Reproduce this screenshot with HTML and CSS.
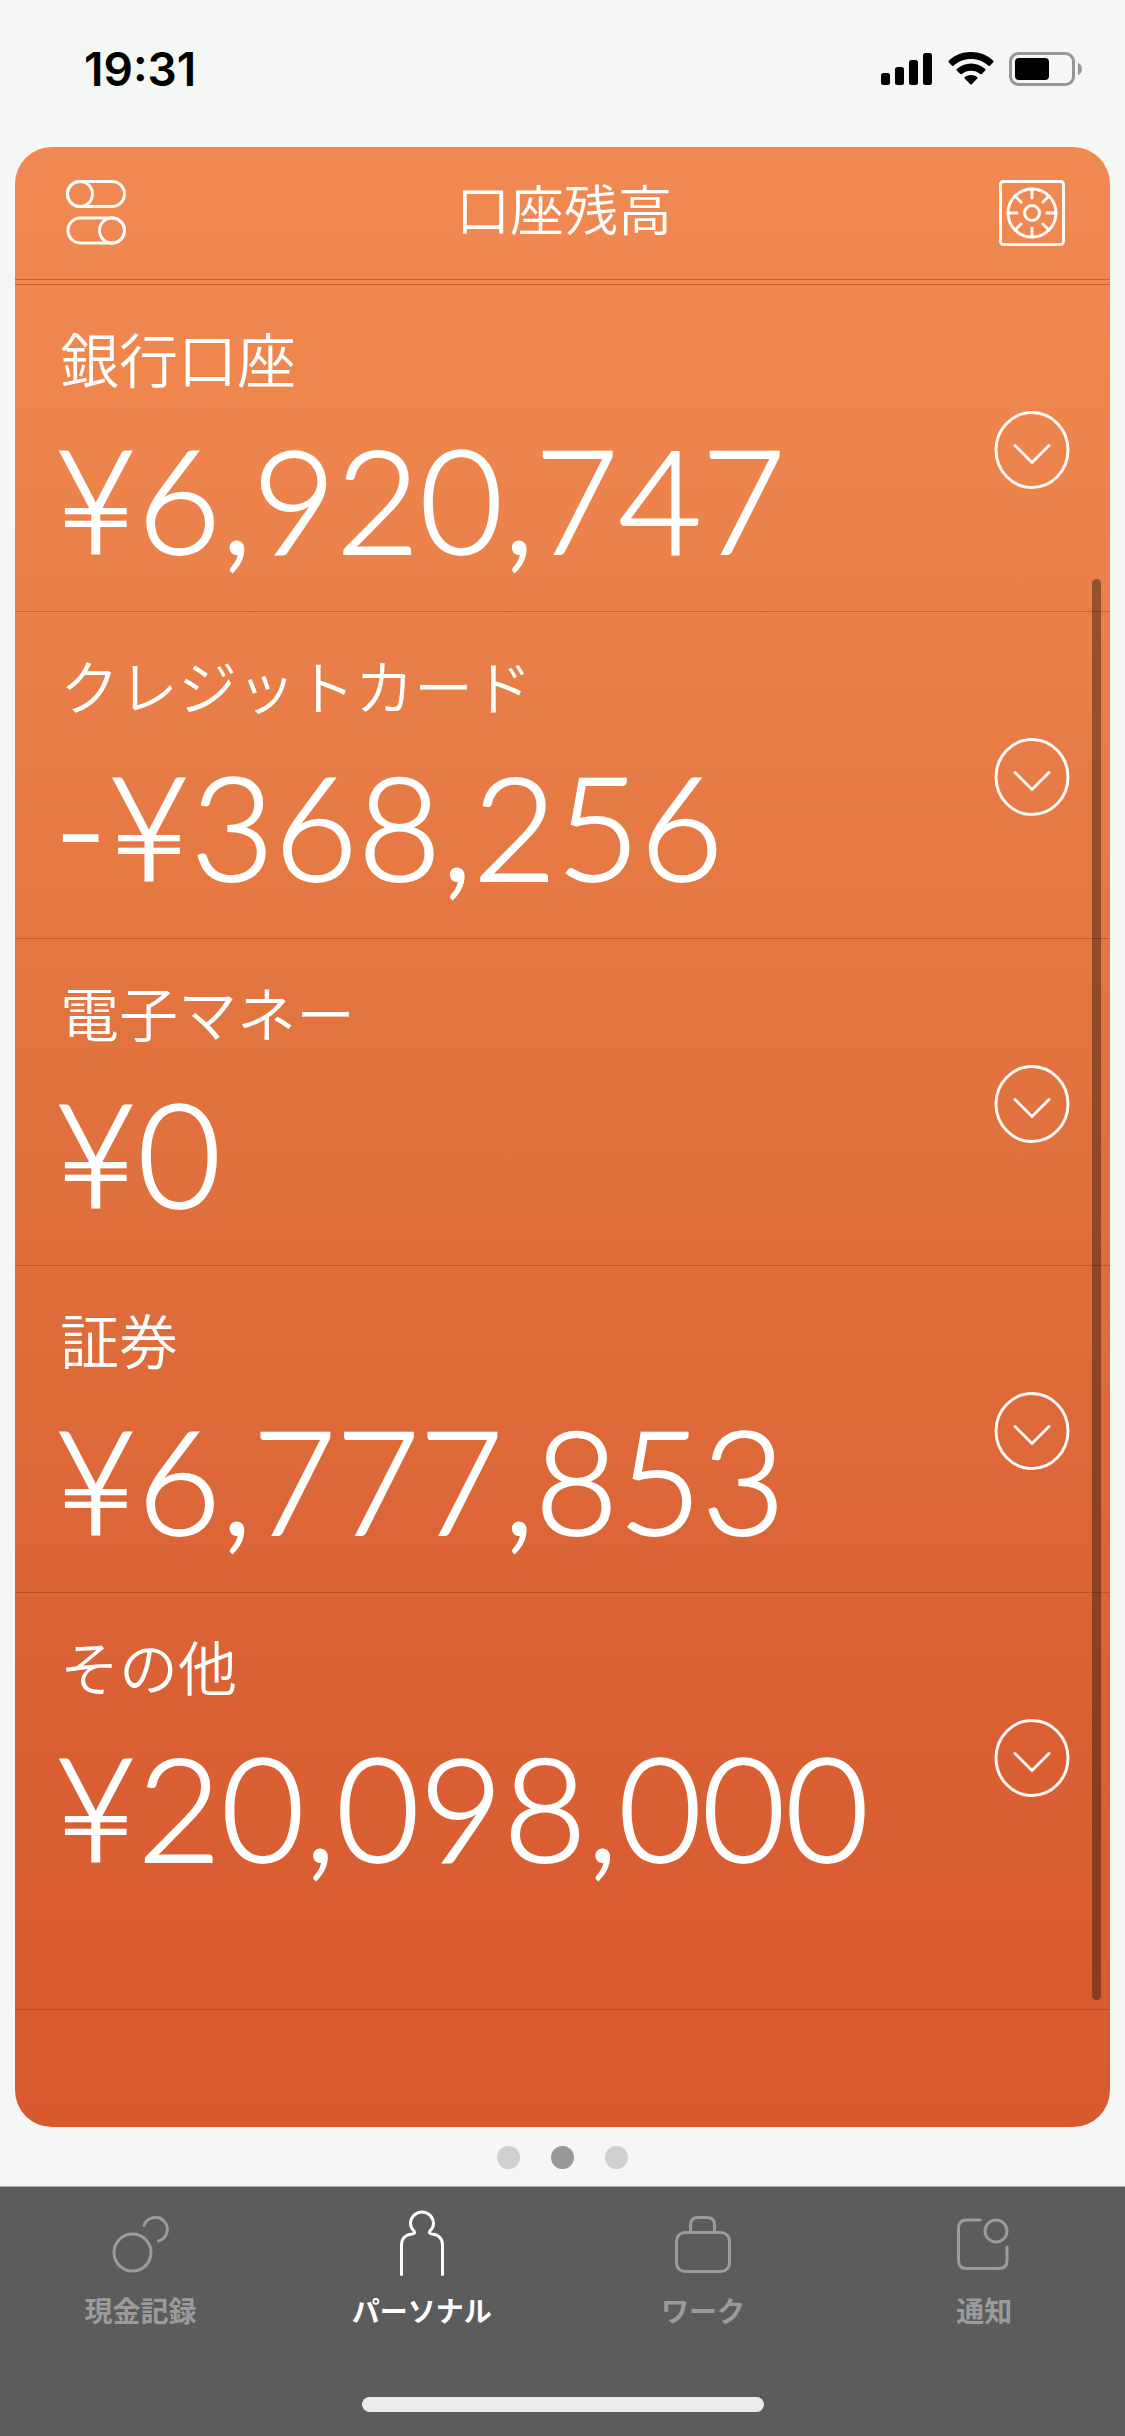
FILE: index.html
```html
<!DOCTYPE html>
<html lang="ja">
<head>
<meta charset="utf-8">
<meta name="viewport" content="width=device-width, initial-scale=1">
<title>口座残高</title>
<link rel="stylesheet" href="styles.css">
</head>
<body>
<div class="app">
  <div class="status">
    <span class="time">19:31</span>
    <div class="status-icons">
      <svg width="52" height="34" viewBox="0 0 52 34" aria-hidden="true">
        <rect x="0" y="21" width="9" height="12" rx="2.5"/>
        <rect x="14" y="15" width="9" height="18" rx="2.5"/>
        <rect x="28" y="8" width="9" height="25" rx="2.5"/>
        <rect x="42" y="1" width="9" height="32" rx="2.5"/>
      </svg>
      <svg width="46" height="34" viewBox="0 0 46 34" aria-hidden="true">
        <path d="M23 0C31.700 0 39.500 3.300 45.300 8.800Q46 9.500 45.300 10.200L41.900 13.700Q41.200 14.400 40.500 13.700C35.800 9.500 29.800 7 23 7S10.200 9.500 5.500 13.700Q4.800 14.400 4.100 13.700L.7 10.200Q0 9.500.7 8.800C6.500 3.300 14.300 0 23 0Z"/>
        <path d="M23 11.500C28.500 11.500 33.400 13.600 37.200 17Q37.900 17.700 37.200 18.400L33.700 21.900Q33 22.600 32.300 22C29.700 19.900 26.500 18.700 23 18.700S16.300 19.900 13.700 22Q13 22.600 12.300 21.900L8.800 18.400Q8.100 17.700 8.800 17C12.600 13.600 17.500 11.500 23 11.500Z"/>
        <path d="M23 23C25.300 23 27.400 23.700 29.100 25Q30 25.700 29.300 26.400L23.700 32.300Q23 33 22.300 32.300L16.700 26.400Q16 25.700 16.900 25C18.600 23.700 20.700 23 23 23Z"/>
      </svg>
      <svg width="74" height="34" viewBox="0 0 74 34" aria-hidden="true">
        <rect x="1.500" y="1.500" width="63" height="31" rx="8" fill="none" stroke="#969796" stroke-width="3"/>
        <rect x="6" y="6" width="34" height="22" rx="4"/>
        <path d="M69 11C71.600 12 73 14.200 73 17S71.600 22 69 23Z" fill="#969796"/>
      </svg>
    </div>
  </div>

  <main class="card">
    <header class="card-head">
      <button class="icon-btn" type="button" aria-label="表示設定">
        <svg width="66" height="66" viewBox="0 0 66 66" aria-hidden="true">
          <rect x="4.500" y="1.500" width="57" height="25" rx="12.500"/>
          <circle cx="17" cy="14" r="12.500"/>
          <rect x="5" y="38" width="56.500" height="25" rx="12.500"/>
          <circle cx="49" cy="50.500" r="12.500"/>
        </svg>
      </button>
      <h1 class="title">口座残高</h1>
      <button class="icon-btn" type="button" aria-label="金庫">
        <svg width="66" height="66" viewBox="0 0 66 66" aria-hidden="true">
          <rect x="1.500" y="1.500" width="63" height="63" rx="3"/>
          <circle cx="33" cy="33" r="24"/>
          <circle cx="33" cy="33" r="7.500"/>
          <path d="M33 9V18M33 48V57M9 33H18M48 33H57M16 16L22 22M44 44L50 50M16 50L22 44M44 22L50 16"/>
        </svg>
      </button>
    </header>

    <div class="list-area">
      <ul class="accounts">
        <li class="account">
          <div class="account-text"><h2 class="label">銀行口座</h2><p class="amount">¥6,920,747</p></div>
          <button class="expand" type="button" aria-label="銀行口座を開く"><svg width="76" height="78" viewBox="0 0 76 78" aria-hidden="true"><ellipse cx="38" cy="39" rx="36" ry="37.500"/><path d="M21 34.500L38 51.500L55 34.500"/></svg></button>
        </li>
        <li class="account">
          <div class="account-text"><h2 class="label">クレジットカード</h2><p class="amount">-¥368,256</p></div>
          <button class="expand" type="button" aria-label="クレジットカードを開く"><svg width="76" height="78" viewBox="0 0 76 78" aria-hidden="true"><ellipse cx="38" cy="39" rx="36" ry="37.500"/><path d="M21 34.500L38 51.500L55 34.500"/></svg></button>
        </li>
        <li class="account">
          <div class="account-text"><h2 class="label">電子マネー</h2><p class="amount">¥0</p></div>
          <button class="expand" type="button" aria-label="電子マネーを開く"><svg width="76" height="78" viewBox="0 0 76 78" aria-hidden="true"><ellipse cx="38" cy="39" rx="36" ry="37.500"/><path d="M21 34.500L38 51.500L55 34.500"/></svg></button>
        </li>
        <li class="account">
          <div class="account-text"><h2 class="label">証券</h2><p class="amount">¥6,777,853</p></div>
          <button class="expand" type="button" aria-label="証券を開く"><svg width="76" height="78" viewBox="0 0 76 78" aria-hidden="true"><ellipse cx="38" cy="39" rx="36" ry="37.500"/><path d="M21 34.500L38 51.500L55 34.500"/></svg></button>
        </li>
        <li class="account">
          <div class="account-text"><h2 class="label">その他</h2><p class="amount">¥20,098,000</p></div>
          <button class="expand" type="button" aria-label="その他を開く"><svg width="76" height="78" viewBox="0 0 76 78" aria-hidden="true"><ellipse cx="38" cy="39" rx="36" ry="37.500"/><path d="M21 34.500L38 51.500L55 34.500"/></svg></button>
        </li>
      </ul>
      <div class="scroll-thumb"></div>
    </div>
  </main>

  <div class="pager">
    <span class="dot"></span><span class="dot dot-on"></span><span class="dot"></span>
  </div>

  <footer class="tabbar">
    <nav class="tabs">
      <a class="tab" href="#cash">
        <svg width="66" height="66" viewBox="0 0 66 66" aria-hidden="true"><circle cx="24.500" cy="42.500" r="18.500"/><path d="M36 15.500A12 12 0 1 1 50.500 31"/></svg>
        <span>現金記録</span>
      </a>
      <a class="tab tab-on" href="#personal" aria-current="page">
        <svg width="66" height="66" viewBox="0 0 66 66" aria-hidden="true"><path d="M12.500 64.500V35C12.500 28 17 24.500 23 24Q27 23.500 25 21C22.500 18.500 21.500 16 21.500 13.500A11.500 11.500 0 0 1 44.500 13.500C44.500 16 43.500 18.500 41 21Q39 23.500 43 24C49 24.500 53.500 28 53.500 35V64.500"/></svg>
        <span>パーソナル</span>
      </a>
      <a class="tab" href="#work">
        <svg width="66" height="66" viewBox="0 0 66 66" aria-hidden="true"><rect x="6.500" y="22.500" width="53" height="39" rx="8.500"/><path d="M20.500 22.500V15Q20.500 7.500 28 7.500H37.500Q44.500 7.500 44.500 15V22.500"/></svg>
        <span>ワーク</span>
      </a>
      <a class="tab" href="#notice">
        <svg width="66" height="66" viewBox="0 0 66 66" aria-hidden="true"><circle cx="45" cy="21" r="11"/><path d="M29.500 10H15.500Q7.500 10 7.500 18V50.500Q7.500 58.500 15.500 58.500H48Q56 58.500 56 50.500V37"/></svg>
        <span>通知</span>
      </a>
    </nav>
    <div class="home-indicator"></div>
  </footer>
</div>
</body>
</html>
```
FILE: styles.css
```css
* {
  box-sizing: border-box;
}

body {
  margin: 0;
  background: #f5f7f4;
  font-family: "Noto Sans CJK JP", sans-serif;
}

.app {
  display: flex;
  flex-direction: column;
  min-height: 100vh;
}

button {
  display: block;
  padding: 0;
  border: 0;
  background: none;
  cursor: pointer;
}

svg {
  display: block;
}

.status {
  display: flex;
  justify-content: space-between;
  align-items: center;
  padding: 41px 42px 50px 84px;
}

.time {
  font: 600 46px/56px Inter, sans-serif;
}

.status-icons {
  display: flex;
  gap: 15px;
}

.card {
  flex: 1;
  display: flex;
  flex-direction: column;
  margin: 0 15px;
  border-radius: 37px;
  background: linear-gradient(#f08a52, #ee864e 12%, #e0703d 52%, #da6034 80%, #d8592e);
  color: #fff;
  overflow: hidden;
}

.card-head {
  display: flex;
  justify-content: space-between;
  align-items: center;
  padding: 33px 45px 33px 48px;
  border-bottom: 1px solid rgba(150, 50, 20, .45);
}

.icon-btn svg,
.expand svg {
  fill: none;
  stroke: #fff;
  stroke-width: 3;
  stroke-opacity: .95;
  stroke-linecap: round;
}

.title {
  margin: 0;
  padding-bottom: 10px;
  font-size: 54px;
  font-weight: 350;
  line-height: 56px;
}

.list-area {
  position: relative;
  margin-top: 4px;
}

.accounts {
  margin: 0;
  padding: 0 0 90px;
  list-style: none;
  border-top: 1px solid rgba(150, 50, 20, .45);
  border-bottom: 1px solid rgba(150, 50, 20, .4);
}

.account {
  display: flex;
  justify-content: space-between;
  align-items: center;
  padding: 40px 40px 37px 45px;
  border-bottom: 1px solid rgba(150, 50, 20, .4);
}

.account:last-child {
  border-bottom: 0;
}

.label {
  margin: 0 0 33px;
  font-size: 59px;
  font-weight: 350;
  line-height: 66px;
}

/* The yen sign has a wide side bearing; pull the figures out to the label's edge. */
.amount {
  margin: 0 0 0 -6px;
  font: 300 144px/150px Lato, sans-serif;
  -webkit-text-stroke: 2px #fff;
}

.scroll-thumb {
  position: absolute;
  top: 295px;
  right: 9px;
  bottom: 10px;
  width: 9px;
  border-radius: 5px;
  background: rgba(0, 0, 0, .36);
}

.pager {
  display: flex;
  justify-content: center;
  gap: 31px;
  padding: 19px 0 17px;
}

.dot {
  width: 23px;
  height: 23px;
  border-radius: 50%;
  background: #d1cfd0;
}

.dot-on {
  background: #999;
}

.tabbar {
  padding: 23px 0 24px;
  border-top: 1px solid #a5a8a5;
  background: #5c5c5c;
}

.tabs {
  display: grid;
  grid-template-columns: repeat(4, 1fr);
}

.tab {
  display: flex;
  flex-direction: column;
  align-items: center;
  gap: 14px;
  color: #9b9b9b;
  font-size: 28px;
  font-weight: 700;
  line-height: 40px;
  text-decoration: none;
}

.tab svg {
  fill: none;
  stroke: currentColor;
  stroke-width: 3;
  stroke-linecap: round;
}

.tab-on {
  color: #fff;
}

.home-indicator {
  width: 402px;
  height: 15px;
  margin: 67px auto 0;
  border-radius: 8px;
  background: #ebebeb;
}
```
